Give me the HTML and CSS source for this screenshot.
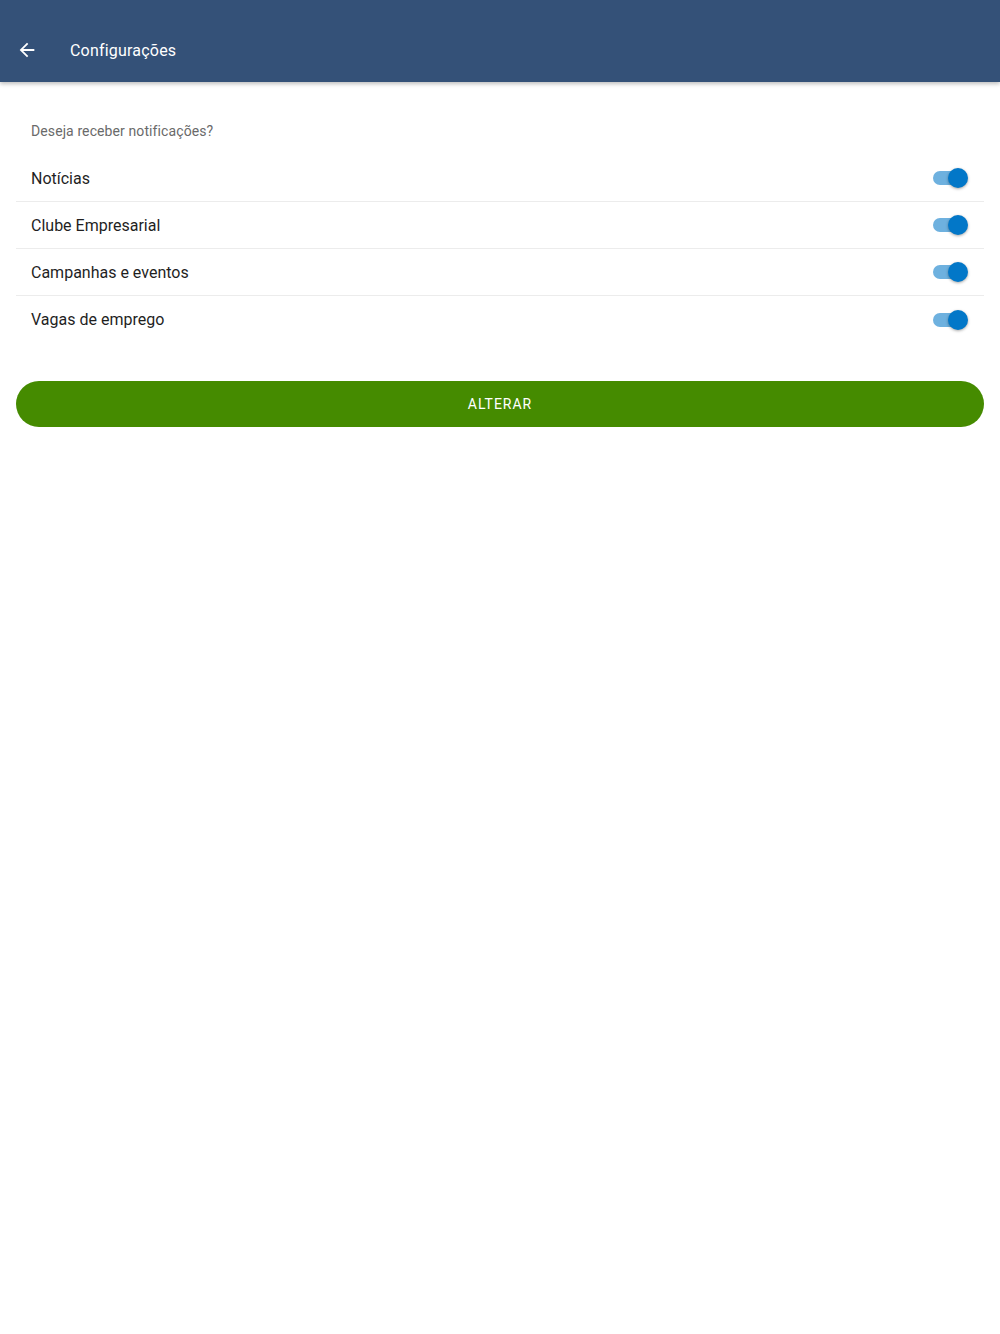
FILE: index.html
```html
<!DOCTYPE html>
<html lang="pt-BR">
<head>
  <meta charset="UTF-8" />
  <meta name="viewport" content="width=device-width, initial-scale=1" />
  <title>Configurações</title>
  <link rel="stylesheet" href="styles.css">
</head>
<body>
  <header class="toolbar">
    <button class="back" aria-label="Voltar">
      <svg width="22" height="22" viewBox="0 0 24 24"><path d="M20 11H7.83l5.59-5.59L12 4l-8 8 8 8 1.41-1.41L7.83 13H20v-2z" fill="#fff"/></svg>
    </button>
    <div class="title">Configurações</div>
  </header>

  <main class="content">
    <div class="list-header">Deseja receber notificações?</div>
    <ul class="list">
      <li class="item">
        <span>Notícias</span>
        <label class="toggle"><input type="checkbox" checked><span class="track"></span></label>
      </li>
      <li class="item">
        <span>Clube Empresarial</span>
        <label class="toggle"><input type="checkbox" checked><span class="track"></span></label>
      </li>
      <li class="item">
        <span>Campanhas e eventos</span>
        <label class="toggle"><input type="checkbox" checked><span class="track"></span></label>
      </li>
      <li class="item">
        <span>Vagas de emprego</span>
        <label class="toggle"><input type="checkbox" checked><span class="track"></span></label>
      </li>
    </ul>
    <button class="btn-submit" type="button">ALTERAR</button>
  </main>
</body>
</html>
```

FILE: styles.css
```css
:root {
  --primary: #345178;
  --accent: #0277c8;
  --accent-light: #6eb1df;
  --success: #458b00;
  --text-dark: #1f1f1f;
  --text-muted: #6a6a6a;
  --divider: #ececec;
}

* {
  box-sizing: border-box;
  margin: 0;
  padding: 0;
}

body {
  font-family: Roboto, "Noto Sans", sans-serif;
  background: #fff;
  color: var(--text-dark);
}

/* Toolbar */
.toolbar {
  height: 82px;
  background: var(--primary);
  display: flex;
  align-items: center;
  padding: 18px 0 0 16px;
  box-shadow: 0 2px 4px rgba(0, 0, 0, 0.25);
}
.back {
  background: none;
  border: none;
  display: flex;
  width: 22px;
  height: 22px;
  cursor: pointer;
}
.title {
  margin-left: 32px;
  color: #fff;
  font-size: 16px;
  font-weight: 400;
  letter-spacing: 0.2px;
}

.content {
  padding: 0 16px;
}

.list-header {
  padding: 40px 15px 0;
  font-size: 14px;
  color: var(--text-muted);
  height: 73px;
  line-height: 18px;
  letter-spacing: 0.1px;
}

.list {
  list-style: none;
}
.item {
  display: flex;
  align-items: center;
  justify-content: space-between;
  height: 47px;
  padding: 0 16px 0 15px;
  font-size: 16px;
  border-bottom: 1px solid var(--divider);
}
.item:last-child {
  border-bottom: none;
}

/* Toggle switch */
.toggle {
  position: relative;
  width: 35px;
  height: 20px;
  display: inline-block;
}
.toggle input {
  display: none;
}
.track {
  position: absolute;
  left: 0;
  right: 2px;
  top: 3px;
  height: 14px;
  border-radius: 7px;
  background: #bdbdbd;
}
.track::after {
  content: "";
  position: absolute;
  top: -3px;
  left: 0;
  width: 20px;
  height: 20px;
  border-radius: 50%;
  background: #f1f1f1;
  box-shadow: 0 1px 3px rgba(0, 0, 0, 0.35);
}
.toggle input:checked + .track {
  background: var(--accent-light);
}
.toggle input:checked + .track::after {
  left: 15px;
  background: var(--accent);
}

.btn-submit {
  display: block;
  width: 100%;
  height: 46px;
  margin-top: 38px;
  border: none;
  border-radius: 23px;
  background: var(--success);
  color: #fff;
  font-family: inherit;
  font-size: 14px;
  font-weight: 400;
  letter-spacing: 1px;
  cursor: pointer;
}
```
